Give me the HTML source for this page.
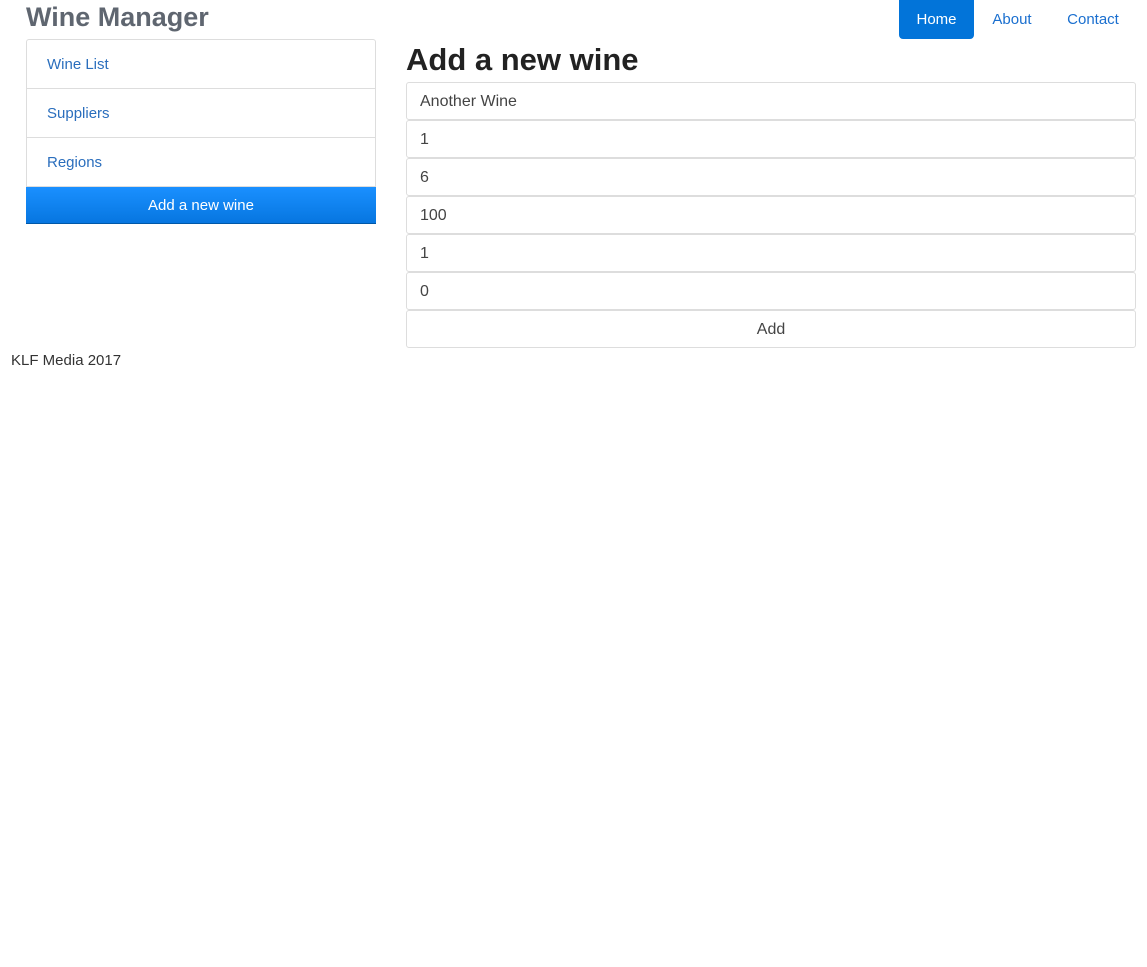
<!DOCTYPE html>
<html><head><style>
body{margin:0;background:#fff;font-family:"Liberation Sans",sans-serif;position:relative;width:1147px;height:967px}
.a{position:absolute}
.brand{left:26px;top:1px;font-size:27px;font-weight:bold;color:#5f6670;line-height:32px}
.nav a{position:absolute;top:0;height:39px;line-height:40px;font-size:15px;color:#1a6fcf;text-decoration:none;text-align:center}
.list{left:26px;top:39px;width:348px;border:1px solid #ddd;border-radius:3px 3px 0 0}
.list div{height:48px;line-height:50px;padding-left:20px;border-bottom:1px solid #ddd;color:#2a6ebd;font-size:15px}
.btn{left:26px;top:187px;width:350px;height:37px;line-height:38px;text-align:center;color:#fff;font-size:15px;background:linear-gradient(#1a90ff,#0776e0);border-bottom:1px solid #0058a8;box-sizing:border-box}
h1{position:absolute;left:406px;top:41px;margin:0;font-size:31px;line-height:38px;color:#222}
.in{position:absolute;left:406px;width:730px;height:38px;border:1px solid #ddd;border-radius:3px;box-sizing:border-box;padding-left:13px;line-height:37px;font-size:16px;color:#444}
</style></head><body>
<div class="a brand">Wine Manager</div>
<div class="nav">
<a style="left:899px;width:75px;background:#0274d9;color:#fff;border-radius:0 0 4px 4px">Home</a>
<a style="left:978px;width:68px">About</a>
<a style="left:1053px;width:80px">Contact</a>
</div>
<div class="a list"><div>Wine List</div><div>Suppliers</div><div style="border:0">Regions</div></div>
<div class="a btn">Add a new wine</div>
<h1>Add a new wine</h1>
<div class="in" style="top:82px">Another Wine</div>
<div class="in" style="top:120px">1</div>
<div class="in" style="top:158px">6</div>
<div class="in" style="top:196px">100</div>
<div class="in" style="top:234px">1</div>
<div class="in" style="top:272px">0</div>
<div class="in" style="top:310px;text-align:center;padding:0">Add</div>
<div class="a" style="left:11px;top:352px;font-size:15px;color:#333">KLF Media 2017</div>
</body></html>
